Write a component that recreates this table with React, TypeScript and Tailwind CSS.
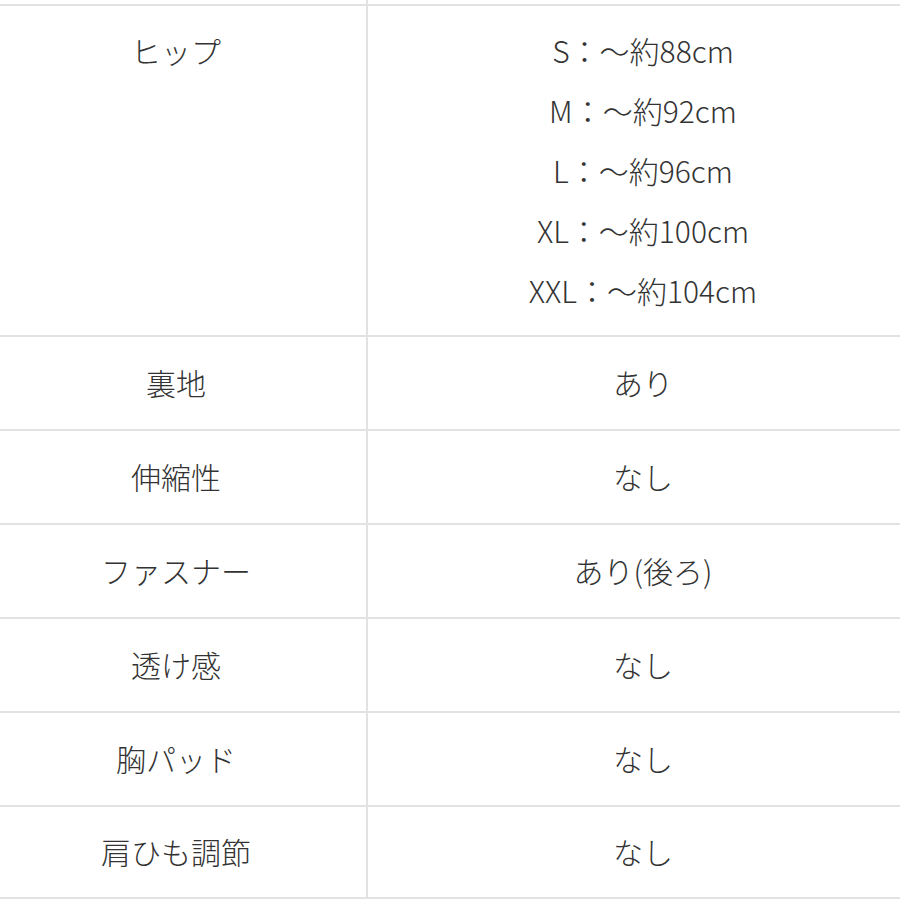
import React from "react";

const font = { fontFamily: '"Noto Sans CJK JP", "Noto Sans", sans-serif' };

function Row({ left, right, last }: { left: string; right: string; last?: boolean }) {
  return (
    <div className={`flex border-t-2 border-[#e2e2e2] h-[94px] ${last ? "border-b-2" : ""}`}>
      <div className="w-[368px] shrink-0 border-r-2 border-[#e2e2e2] flex items-center justify-center pr-[14px] pb-[2px]">
        <span>{left}</span>
      </div>
      <div className="flex-1 flex items-center justify-center pl-[18px] pb-[2px]">
        <span>{right}</span>
      </div>
    </div>
  );
}

export default function App() {
  const sizes = ["S：～約88cm", "M：～約92cm", "L：～約96cm", "XL：～約100cm", "XXL：～約104cm"];
  const rows: [string, string][] = [
    ["裏地", "あり"],
    ["伸縮性", "なし"],
    ["ファスナー", "あり(後ろ)"],
    ["透け感", "なし"],
    ["胸パッド", "なし"],
    ["肩ひも調節", "なし"],
  ];
  return (
    <div className="w-[900px] h-[900px] bg-white text-[#333333] text-[30px] font-light overflow-hidden" style={font}>
      <div className="flex h-[4px]">
        <div className="w-[368px] shrink-0 border-r-2 border-[#e2e2e2]" />
      </div>
      <div className="flex border-t-2 border-[#e2e2e2] h-[331px]">
        <div className="w-[368px] shrink-0 border-r-2 border-[#e2e2e2] flex justify-center pr-[14px] pt-[14px]">
          <span className="leading-[60px]">ヒップ</span>
        </div>
        <div className="flex-1 flex flex-col items-center pl-[18px] pt-[14px]">
          {sizes.map((s) => (
            <div key={s} className="leading-[60px] h-[60px]">{s}</div>
          ))}
        </div>
      </div>
      {rows.map(([l, r], i) => (
        <Row key={l} left={l} right={r} last={i === rows.length - 1} />
      ))}
    </div>
  );
}
